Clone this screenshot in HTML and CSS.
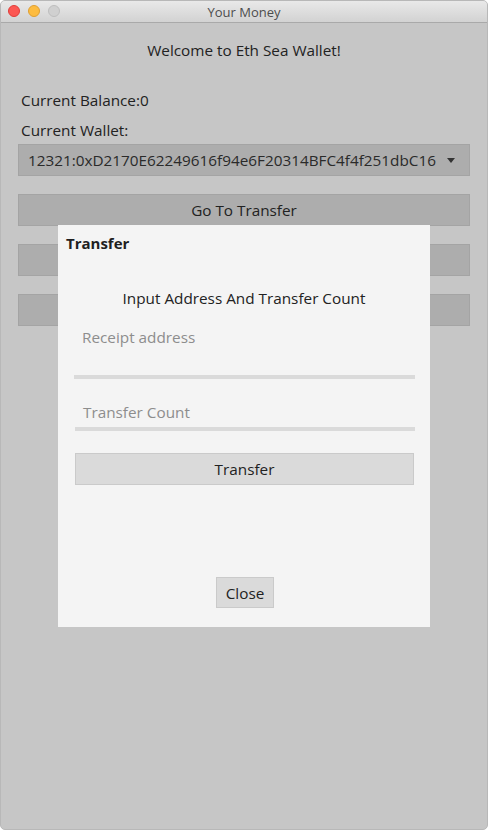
FILE: index.html
```html
<!DOCTYPE html>
<html>
<head>
<meta charset="utf-8">
<link rel="stylesheet" href="styles.css">
</head>
<body>
<div class="window">
  <div class="titlebar">
    <div class="lights">
      <span class="light red"></span>
      <span class="light yellow"></span>
      <span class="light gray"></span>
    </div>
    <div class="title">Your Money</div>
  </div>
  <div class="content">
    <div class="welcome">Welcome to Eth Sea Wallet!</div>
    <div class="label balance">Current Balance:0</div>
    <div class="label wallet">Current Wallet:</div>
    <div class="select">
      <span class="select-text">12321:0xD2170E62249616f94e6F20314BFC4f4f251dbC16</span>
      <svg class="arrow" width="8" height="5" viewBox="0 0 8 5"><path d="M0 0H8L4 5Z" fill="#333"/></svg>
    </div>
    <div class="btn">Go To Transfer</div>
    <div class="btn"></div>
    <div class="btn"></div>

    <div class="dialog">
      <div class="dlg-title">Transfer</div>
      <div class="dlg-heading">Input Address And Transfer Count</div>
      <div class="field field-address"><span class="placeholder">Receipt address</span></div>
      <div class="field field-count"><span class="placeholder">Transfer Count</span></div>
      <div class="dlg-btn">Transfer</div>
      <div class="close-row"><div class="close-btn">Close</div></div>
    </div>
  </div>
</div>
</body>
</html>
```

FILE: styles.css
```css
* { box-sizing: border-box; }
html, body { margin: 0; padding: 0; background: #ffffff; }
body { font-family: "Open Sans", "Noto Sans", sans-serif; }

.window {
  width: 488px;
  height: 830px;
  border-radius: 5px;
  overflow: hidden;
  background: #c6c6c6;
  border: 1px solid #b8b8b8;
  display: flex;
  flex-direction: column;
}

.titlebar {
  height: 22px;
  flex: none;
  position: relative;
  background: linear-gradient(#e9e9e9, #d2d2d2);
  border-bottom: 1px solid #a9a9a9;
  display: flex;
  align-items: center;
  justify-content: center;
}
.lights {
  position: absolute;
  left: 7px;
  top: 4px;
  display: flex;
  gap: 8px;
}
.light {
  width: 12px;
  height: 12px;
  border-radius: 50%;
  display: block;
}
.light.red { background: #fc5753; border: 1px solid #df3d39; }
.light.yellow { background: #fdbc40; border: 1px solid #de9f32; }
.light.gray { background: #d0d0d0; border: 1px solid #bdbdbd; }
.title {
  font-size: 13px;
  color: #4d4d4d;
  line-height: 20px;
}

.content {
  flex: 1;
  position: relative;
  padding: 0 17px 0 17px;
  display: flex;
  flex-direction: column;
  color: #222;
}
.welcome {
  text-align: center;
  font-size: 15.3px;
  margin-top: 17px;
  line-height: 20px;
}
.label {
  font-size: 15.3px;
  line-height: 20px;
  padding-left: 3px;
}
.balance { margin-top: 30px; }
.wallet { margin-top: 10px; }

.select {
  margin-top: 4px;
  height: 32px;
  background: #adadad;
  border: 1px solid #a4a4a4;
  display: flex;
  align-items: center;
  justify-content: space-between;
  padding: 0 14px 0 9px;
  font-size: 15.3px;
  color: #2a2a2a;
}
.arrow { margin-top: 1px; }

.btn {
  margin-top: 18px;
  height: 32px;
  background: #adadad;
  border: 1px solid #a4a4a4;
  display: flex;
  align-items: center;
  justify-content: center;
  font-size: 15.3px;
  color: #222;
}

.dialog {
  position: absolute;
  left: 57px;
  top: 202px;
  width: 372px;
  height: 402px;
  background: #f4f4f4;
  display: flex;
  flex-direction: column;
  padding: 0 16px;
}
.dlg-title {
  font-weight: bold;
  font-size: 15px;
  line-height: 20px;
  margin-top: 8px;
  margin-left: -8px;
  color: #1f1f1f;
}
.dlg-heading {
  text-align: center;
  font-size: 15.3px;
  line-height: 20px;
  margin-top: 35px;
  color: #222;
}
.field {
  border-bottom: 4px solid #dadada;
  font-size: 15.3px;
  color: #8d8d8d;
}
.field-address {
  margin-top: 10px;
  height: 61px;
  padding: 9px 0 0 8px;
  line-height: 20px;
  margin-right: -1px;
}
.field-count {
  margin-top: 23px;
  height: 29px;
  padding-left: 8px;
  line-height: 20px;
  margin-left: 1px;
  margin-right: -1px;
}
.dlg-btn {
  margin-top: 22px;
  margin-left: 1px;
  height: 32px;
  background: #dadada;
  border: 1px solid #cacaca;
  display: flex;
  align-items: center;
  justify-content: center;
  font-size: 15.3px;
  color: #222;
}
.close-row {
  margin-top: 92px;
  display: flex;
  justify-content: center;
  padding-left: 2px;
}
.close-btn {
  width: 58px;
  height: 31px;
  background: #dadada;
  border: 1px solid #cacaca;
  display: flex;
  align-items: center;
  justify-content: center;
  font-size: 15.3px;
  color: #222;
}
```
